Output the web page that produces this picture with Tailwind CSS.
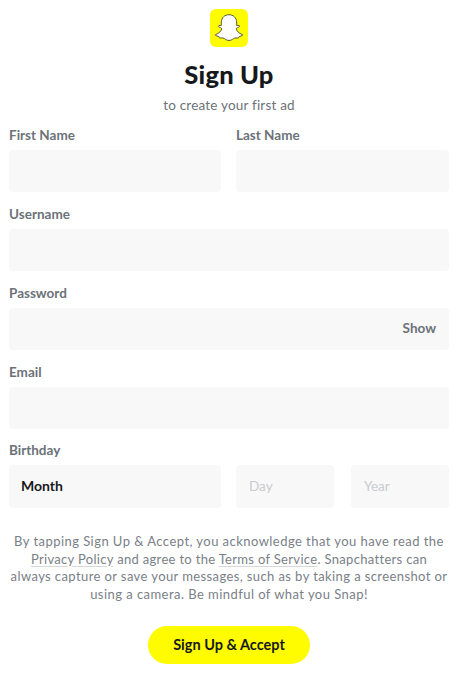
<!DOCTYPE html>
<html lang="en">
<head>
    <meta charset="UTF-8">
    <meta name="viewport" content="width=device-width, initial-scale=1.0">
    <title>Sign Up</title>
    <script src="https://cdn.jsdelivr.net/npm/@tailwindcss/browser@4"></script>
</head>
<body class="bg-white font-['Lato',sans-serif] overflow-hidden">
    <main class="w-[457px] h-[674px] pl-[9px] pr-[8px] pt-[9px] flex flex-col">
        <!-- header -->
        <div class="flex flex-col items-center">
            <div class="w-[38px] h-[38px] rounded-[6px] bg-[#fffc00] flex items-center justify-center">
                <svg viewBox="0 0 32 32" class="w-[36px] h-[36px]">
                    <path d="M16 4.2c3.9 0 6.6 2.7 6.800 6.400.1 1.300 0 2.500 0 3.200.6.3 1.500-.4 2.100-.1.6.3.6 1-.1 1.400-.8.5-2.300.7-2.300 1.600 0 1.400 2.500 4.500 5.200 5 .5.1.6.5.3.8-.6.6-2.100.9-3 1.100-.4.1-.2 1.100-.6 1.300-.6.2-1.800-.3-3.100 0-1.600.4-2.800 2.200-5.300 2.200s-3.700-1.800-5.300-2.200c-1.300-.3-2.500.2-3.100 0-.4-.2-.2-1.200-.6-1.300-.9-.2-2.400-.5-3-1.100-.3-.3-.2-.7.3-.8 2.700-.5 5.200-3.600 5.200-5 0-.9-1.500-1.100-2.300-1.600-.7-.4-.7-1.100-.1-1.400.6-.3 1.500.4 2.100.1 0-.7-.1-1.900 0-3.200.2-3.700 2.900-6.400 6.800-6.400z" fill="#fff" stroke="#4a4a30" stroke-width="0.8"/>
                </svg>
            </div>
            <h1 class="mt-[11px] text-[25.5px] leading-[32px] font-black text-[#16191c] tracking-[0.2px]">Sign Up</h1>
            <p class="mt-[6px] text-[13.5px] leading-[18px] text-[#6c7279] tracking-[0.2px]">to create your first ad</p>
        </div>

        <form class="mt-[12px] flex flex-col">
            <div class="grid grid-cols-[212px_213px] gap-[15px]">
                <div>
                    <label class="block h-[24px] text-[13.5px] leading-[18px] font-bold text-[#6c7279]">First Name</label>
                    <div class="h-[42px] bg-[#f8f8f8] rounded-[4px]"></div>
                </div>
                <div>
                    <label class="block h-[24px] text-[13.5px] leading-[18px] font-bold text-[#6c7279]">Last Name</label>
                    <div class="h-[42px] bg-[#f8f8f8] rounded-[4px]"></div>
                </div>
            </div>
            <div class="mt-[13px]">
                <label class="block h-[24px] text-[13.5px] leading-[18px] font-bold text-[#6c7279]">Username</label>
                <div class="h-[42px] bg-[#f8f8f8] rounded-[4px]"></div>
            </div>
            <div class="mt-[13px]">
                <label class="block h-[24px] text-[13.5px] leading-[18px] font-bold text-[#6c7279]">Password</label>
                <div class="h-[42px] bg-[#f8f8f8] rounded-[4px] flex items-center justify-end pr-[13px] pb-[2px] text-[13.5px] font-bold text-[#6c7279]">Show</div>
            </div>
            <div class="mt-[13px]">
                <label class="block h-[24px] text-[13.5px] leading-[18px] font-bold text-[#6c7279]">Email</label>
                <div class="h-[42px] bg-[#f8f8f8] rounded-[4px]"></div>
            </div>
            <div class="mt-[12px]">
                <label class="block h-[24px] text-[13.5px] leading-[18px] font-bold text-[#6c7279]">Birthday</label>
                <div class="flex">
                    <div class="w-[212px] h-[43px] bg-[#f8f8f8] rounded-[4px] flex items-center pl-[12px] pb-[2px] text-[14px] font-bold text-[#16191c]">Month</div>
                    <div class="ml-[15px] w-[98px] h-[43px] bg-[#f8f8f8] rounded-[4px] flex items-center pl-[13px] text-[13.5px] text-[#c8cbcf]">Day</div>
                    <div class="ml-[17px] w-[98px] h-[43px] bg-[#f8f8f8] rounded-[4px] flex items-center pl-[13px] text-[13.5px] text-[#c8cbcf]">Year</div>
                </div>
            </div>
        </form>

        <p class="mt-[25px] -mx-[9px] text-center text-[13px] leading-[17.5px] text-[#7a8087] tracking-[0.45px] whitespace-nowrap">
            By tapping Sign Up &amp; Accept, you acknowledge that you have read the<br>
            <span class="tracking-[0.32px]"><span class="underline decoration-[#d5d7da] underline-offset-2">Privacy Policy</span> and agree to the <span class="underline decoration-[#d5d7da] underline-offset-2">Terms of Service</span>. Snapchatters can</span><br>
            <span class="tracking-[0.4px]">always capture or save your messages, such as by taking a screenshot or</span><br>
            using a camera. Be mindful of what you Snap!
        </p>

        <div class="mt-[23px] flex justify-center">
            <button class="w-[162px] h-[38px] rounded-full bg-[#fffc00] text-[14.5px] font-bold text-[#16191c]">Sign Up &amp; Accept</button>
        </div>
    </main>
</body>
</html>
